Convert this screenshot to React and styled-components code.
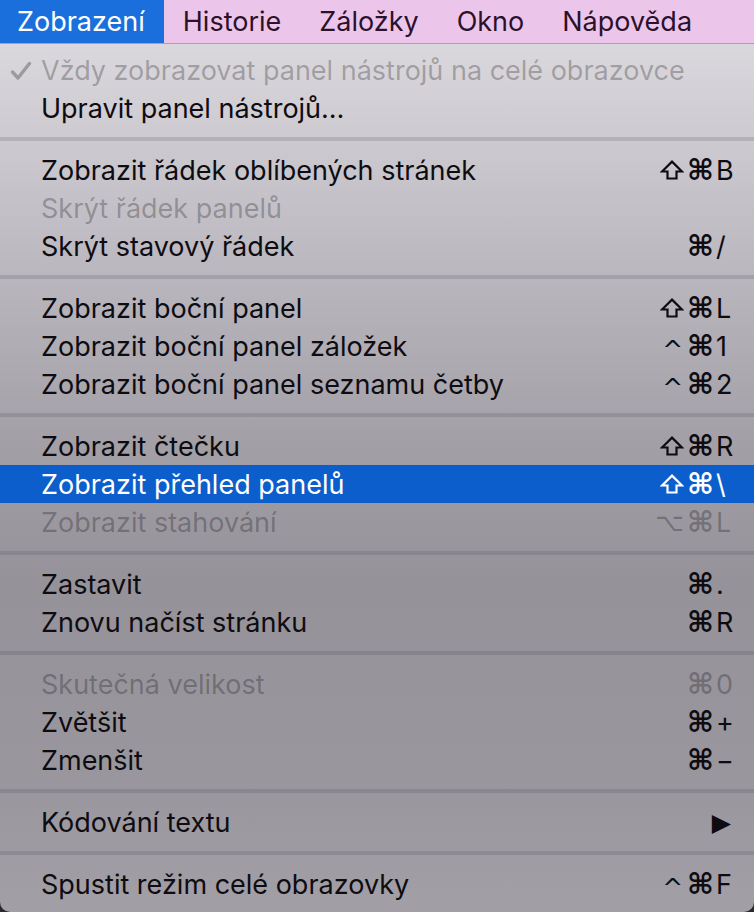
import React from 'react'
import styled, { createGlobalStyle } from 'styled-components'

const GlobalStyle = createGlobalStyle`
    html, body {
        margin: 0;
        padding: 0;
        background: #2a2a2e;
    }
    body {
        font-family: Inter, "Noto Sans", "DejaVu Sans", sans-serif;
        -webkit-font-smoothing: antialiased;
    }
`

const sections = [
    [
        { label: 'Vždy zobrazovat panel nástrojů na celé obrazovce', checked: true, disabled: true },
        { label: 'Upravit panel nástrojů…' },
    ],
    [
        { label: 'Zobrazit řádek oblíbených stránek', mods: '⇧⌘', keyChar: 'B' },
        { label: 'Skrýt řádek panelů', disabled: true },
        { label: 'Skrýt stavový řádek', mods: '⌘', keyChar: '/' },
    ],
    [
        { label: 'Zobrazit boční panel', mods: '⇧⌘', keyChar: 'L' },
        { label: 'Zobrazit boční panel záložek', mods: '^⌘', keyChar: '1' },
        { label: 'Zobrazit boční panel seznamu četby', mods: '^⌘', keyChar: '2' },
    ],
    [
        { label: 'Zobrazit čtečku', mods: '⇧⌘', keyChar: 'R' },
        { label: 'Zobrazit přehled panelů', mods: '⇧⌘', keyChar: '\\', active: true },
        { label: 'Zobrazit stahování', mods: '⌥⌘', keyChar: 'L', disabled: true },
    ],
    [
        { label: 'Zastavit', mods: '⌘', keyChar: '.' },
        { label: 'Znovu načíst stránku', mods: '⌘', keyChar: 'R' },
    ],
    [
        { label: 'Skutečná velikost', mods: '⌘', keyChar: '0', disabled: true },
        { label: 'Zvětšit', mods: '⌘', keyChar: '+' },
        { label: 'Zmenšit', mods: '⌘', keyChar: '−' },
    ],
    [
        { label: 'Kódování textu', submenu: true },
    ],
    [
        { label: 'Spustit režim celé obrazovky', mods: '^⌘', keyChar: 'F' },
    ],
]

const barItems = ['Zobrazení', 'Historie', 'Záložky', 'Okno', 'Nápověda']

// outlined shift arrow, DejaVu's ⇧ is too thin
const ShiftIcon = () => (
    <svg width="24" height="20" viewBox="0 0 24 20" fill="none" stroke="currentColor" strokeWidth="2.2" strokeLinejoin="miter">
        <path d="M12 1.6 L22 11.5 H16.5 V18.5 H7.5 V11.5 H2 Z" />
    </svg>
)

const CheckIcon = () => (
    <svg width="22" height="20" viewBox="0 0 22 20" fill="none" stroke="currentColor" strokeWidth="3.4" strokeLinecap="round" strokeLinejoin="round">
        <path d="M2.5 11 L8 17 L19.5 2.5" />
    </svg>
)

const renderMods = (mods = '') =>
    mods.split('').map((ch, i) =>
        ch === '⇧' ? <Glyph key={i}><ShiftIcon /></Glyph> : <Glyph key={i} kind={ch}>{ch}</Glyph>
    )

const App = () => {
    return (
        <>
            <GlobalStyle />
            <Screen>
                <MenuBar>
                    {barItems.map((item, index) => (
                        <BarItem key={item} open={index === 0}>{item}</BarItem>
                    ))}
                </MenuBar>
                <Dropdown>
                    {sections.map((section, sIndex) => (
                        <React.Fragment key={sIndex}>
                            {sIndex > 0 && <Separator />}
                            {section.map(item => (
                                <Row key={item.label} active={item.active} disabled={item.disabled}>
                                    <Check>{item.checked && <CheckIcon />}</Check>
                                    <Label>{item.label}</Label>
                                    {item.submenu ? (
                                        <Arrow>▶</Arrow>
                                    ) : (
                                        <>
                                            <Mods>{renderMods(item.mods)}</Mods>
                                            <KeyChar>{item.keyChar}</KeyChar>
                                        </>
                                    )}
                                </Row>
                            ))}
                        </React.Fragment>
                    ))}
                </Dropdown>
            </Screen>
        </>
    )
}

export default App

const Screen = styled.div`
    width: 754px;
    height: 912px;
    display: flex;
    flex-direction: column;
    overflow: hidden;
    background: #2a2a2e;
`

const MenuBar = styled.div`
    height: 43px;
    display: flex;
    align-items: stretch;
    background: #ecc6ea;
    border-bottom: 1px solid #a9a2ab;
    flex-shrink: 0;
`

const BarItem = styled.div`
    display: flex;
    align-items: center;
    padding: ${props => props.open ? '0 19px 0 17px' : '0 19px'};
    font-size: 27px;
    color: ${props => props.open ? '#ffffff' : '#2c112b'};
    background: ${props => props.open ? '#1b6fdc' : 'transparent'};
`

const Dropdown = styled.div`
    flex: 1;
    padding: 7px 0 9px;
    border-radius: 0 0 10px 10px;
    background: linear-gradient(180deg, #dad7dd 0%, #bfbcc3 22%, #a3a0a7 45%, #95929a 62%, #99969d 85%, #a29fa6 100%);
`

const Separator = styled.div`
    height: 24px;
    display: flex;
    align-items: center;

    &::after{
        content: '';
        flex: 1;
        height: 4px;
        background: rgba(60, 50, 70, 0.16);
    }
`

const Row = styled.div`
    height: 38px;
    display: grid;
    grid-template-columns: 41px 1fr auto 20px;
    align-items: center;
    padding-right: 18px;
    font-size: 27px;
    color: ${props => props.active ? '#ffffff' : props.disabled ? 'rgba(0, 0, 0, 0.27)' : '#0e0c10'};
    background: ${props => props.active ? '#0b5ecb' : 'transparent'};
`

const Check = styled.span`
    display: flex;
    align-items: center;
    padding-left: 10px;
    padding-top: 2px;
`

const Label = styled.span`
    white-space: nowrap;
`

const Mods = styled.span`
    display: flex;
    align-items: center;
    justify-content: flex-end;
    gap: 3px;
    padding-right: 2px;
`

const Glyph = styled.span`
    display: flex;
    align-items: center;
    font-family: "DejaVu Sans", sans-serif;
    font-size: ${props => props.kind === '⌘' ? '29px' : '25px'};
    font-weight: ${props => props.kind === '⌘' ? 'bold' : 'normal'};
    line-height: 1;
    ${props => props.kind === '^' && 'padding-top: 6px; margin-right: 1px;'}
`

const KeyChar = styled.span`
    text-align: left;
`

const Arrow = styled.span`
    grid-column: 3 / 5;
    justify-self: end;
    padding-right: 5px;
    font-family: "DejaVu Sans", sans-serif;
    font-size: 25px;
    line-height: 1;
`
